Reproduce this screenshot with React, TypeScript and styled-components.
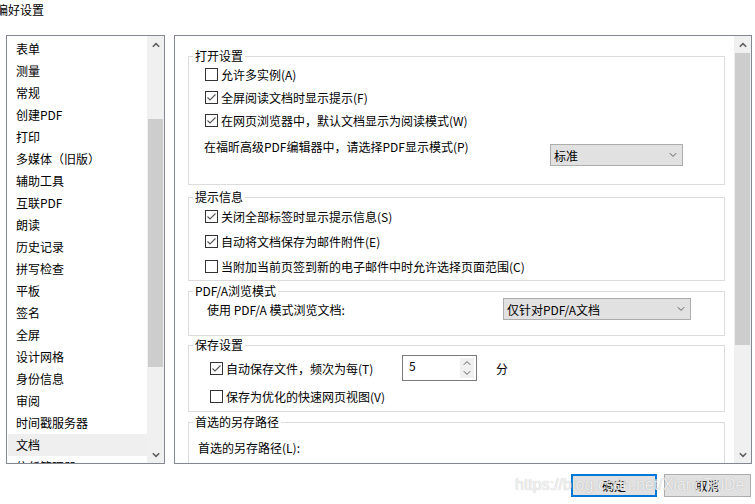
import React from "react";
import styled, { createGlobalStyle } from "styled-components";

const GlobalStyle = createGlobalStyle`
  html, body {
    margin: 0;
    padding: 0;
    background: #fff;
  }
  body {
    font-family: "Noto Sans CJK SC", "Noto Sans", sans-serif;
    font-size: 12px;
    color: #000;
  }
  * {
    box-sizing: border-box;
  }
`;

const navItems = [
  "表单",
  "测量",
  "常规",
  "创建PDF",
  "打印",
  "多媒体（旧版）",
  "辅助工具",
  "互联PDF",
  "朗读",
  "历史记录",
  "拼写检查",
  "平板",
  "签名",
  "全屏",
  "设计网格",
  "身份信息",
  "审阅",
  "时间戳服务器",
  "文档",
  "信任管理器",
];

const Chevron = ({ up, thin }: { up?: boolean; thin?: boolean }) => (
  <svg width="8" height="6" viewBox="0 0 8 6">
    <polyline
      points={up ? "0.8,4.8 4,1.6 7.2,4.8" : "0.8,1.2 4,4.4 7.2,1.2"}
      fill="none"
      stroke="#606060"
      strokeWidth={thin ? 1 : 1.6}
    />
  </svg>
);

export default function App() {
  return (
    <Window>
      <GlobalStyle />
      <TitleBar>偏好设置</TitleBar>
      <Main>
        <NavList>
          <NavItems>
            {navItems.map((item) => (
              <NavItem key={item} $active={item === "文档"}>
                {item}
              </NavItem>
            ))}
          </NavItems>
          <ScrollBar>
            <ScrollArrow>
              <Chevron up />
            </ScrollArrow>
            <ScrollTrack>
              <ScrollThumb $offset={66} $size={248} />
            </ScrollTrack>
            <ScrollArrow>
              <Chevron />
            </ScrollArrow>
          </ScrollBar>
        </NavList>

        <Panel>
          <PanelContent>
            <Group $height={129} $gap={0} $pad="6px 41px 0 16px">
              <Legend>打开设置</Legend>
              <CheckRow $h={23}>
                <CheckBox />
                <span>允许多实例(A)</span>
              </CheckRow>
              <CheckRow $h={23}>
                <CheckBox checked />
                <span>全屏阅读文档时显示提示(F)</span>
              </CheckRow>
              <CheckRow $h={23}>
                <CheckBox checked />
                <span>在网页浏览器中，默认文档显示为阅读模式(W)</span>
              </CheckRow>
              <SelectRow>
                <FieldLabel>在福昕高级PDF编辑器中，请选择PDF显示模式(P)</FieldLabel>
                <Select $w={133} $top={5}>
                  <span>标准</span>
                  <Chevron thin />
                </Select>
              </SelectRow>
            </Group>

            <Group $height={84} $gap={12} $pad="6px 0 0 16px">
              <Legend>提示信息</Legend>
              <CheckRow $h={25}>
                <CheckBox checked />
                <span>关闭全部标签时显示提示信息(S)</span>
              </CheckRow>
              <CheckRow $h={25}>
                <CheckBox checked />
                <span>自动将文档保存为邮件附件(E)</span>
              </CheckRow>
              <CheckRow $h={25}>
                <CheckBox />
                <span>当附加当前页签到新的电子邮件中时允许选择页面范围(C)</span>
              </CheckRow>
            </Group>

            <Group $height={45} $gap={10} $pad="6px 33px 0 18px">
              <Legend>PDF/A浏览模式</Legend>
              <InlineRow>
                <span>使用 PDF/A 模式浏览文档:</span>
                <Select $w={188} $top={0}>
                  <span>仅针对PDF/A文档</span>
                  <Chevron thin />
                </Select>
              </InlineRow>
            </Group>

            <Group $height={67} $gap={9} $pad="9px 0 0 21px">
              <Legend>保存设置</Legend>
              <SpinRow>
                <CheckRow $h={26} $w={192}>
                  <CheckBox checked />
                  <span>自动保存文件，频次为每(T)</span>
                </CheckRow>
                <SpinBox>
                  <SpinValue>5</SpinValue>
                  <SpinButtons>
                    <Chevron up thin />
                    <Chevron thin />
                  </SpinButtons>
                </SpinBox>
                <Unit>分</Unit>
              </SpinRow>
              <CheckRow $h={22} $top={4}>
                <CheckBox />
                <span>保存为优化的快速网页视图(V)</span>
              </CheckRow>
            </Group>

            <Group $height={80} $gap={10} $pad="16px 0 0 9px">
              <Legend>首选的另存路径</Legend>
              <FieldLabel>首选的另存路径(L):</FieldLabel>
            </Group>
          </PanelContent>
          <ScrollBar>
            <ScrollArrow>
              <Chevron up />
            </ScrollArrow>
            <ScrollTrack>
              <ScrollThumb $offset={0} $size={292} />
            </ScrollTrack>
            <ScrollArrow>
              <Chevron />
            </ScrollArrow>
          </ScrollBar>
        </Panel>
      </Main>

      <Footer>
        <Button $primary>确定</Button>
        <Button>取消</Button>
      </Footer>
      <Watermark>https://blog.csdn.net/XiangTaiDe</Watermark>
    </Window>
  );
}

const CheckBox = ({ checked }: { checked?: boolean }) => (
  <Box>
    {checked && (
      <svg width="11" height="11" viewBox="0 0 11 11">
        <polyline
          points="1.5,5.5 4,8 9.5,2.5"
          fill="none"
          stroke="#555"
          strokeWidth="1.1"
        />
      </svg>
    )}
  </Box>
);

const Window = styled.div`
  position: relative;
  width: 755px;
  height: 504px;
  overflow: hidden;
  background: #fff;
  display: flex;
  flex-direction: column;
`;

const TitleBar = styled.div`
  height: 35px;
  padding-top: 2px;
  margin-left: -4px;
  line-height: 16px;
  font-size: 12px;
`;

const Main = styled.div`
  display: flex;
  gap: 9px;
  height: 429px;
  padding-left: 6px;
`;

const NavList = styled.div`
  display: flex;
  width: 159px;
  height: 100%;
  border: 1px solid #828790;
  overflow: hidden;
`;

const NavItems = styled.div`
  flex: 1;
  padding-top: 2px;
  overflow: hidden;
`;

const NavItem = styled.div<{ $active?: boolean }>`
  height: 22px;
  line-height: 22px;
  margin-left: 1px;
  padding-left: 8px;
  white-space: nowrap;
  background: ${(p) => (p.$active ? "#efefef" : "transparent")};
`;

const ScrollBar = styled.div`
  flex: none;
  display: flex;
  flex-direction: column;
  width: 17px;
  height: 100%;
  background: #f0f0f0;
`;

const ScrollArrow = styled.div`
  flex: none;
  height: 17px;
  display: flex;
  align-items: center;
  justify-content: center;
`;

const ScrollTrack = styled.div`
  flex: 1;
  padding: 0 1px;
`;

const ScrollThumb = styled.div<{ $offset: number; $size: number }>`
  margin-top: ${(p) => p.$offset}px;
  height: ${(p) => p.$size}px;
  background: #cdcdcd;
`;

const Panel = styled.div`
  display: flex;
  width: 578px;
  height: 100%;
  border: 1px solid #828790;
  overflow: hidden;
`;

const PanelContent = styled.div`
  flex: 1;
  padding: 20px 9px 0 13px;
  overflow: hidden;
`;

const Group = styled.div<{ $height: number; $gap: number; $pad: string }>`
  position: relative;
  flex: none;
  height: ${(p) => p.$height}px;
  margin-top: ${(p) => p.$gap}px;
  padding: ${(p) => p.$pad};
  border: 1px solid #dcdcdc;
`;

const Legend = styled.span`
  position: absolute;
  top: -9px;
  left: 4px;
  padding: 0 2px;
  line-height: 16px;
  background: #fff;
  white-space: nowrap;
`;

const CheckRow = styled.div<{ $h: number; $w?: number; $top?: number }>`
  display: flex;
  align-items: center;
  gap: 3px;
  height: ${(p) => p.$h}px;
  width: ${(p) => (p.$w ? `${p.$w}px` : "auto")};
  margin-top: ${(p) => p.$top ?? 0}px;
  white-space: nowrap;
`;

const Box = styled.span`
  flex: none;
  display: flex;
  align-items: center;
  justify-content: center;
  width: 13px;
  height: 13px;
  border: 1px solid #333;
  background: #fff;
`;

const SelectRow = styled.div`
  display: flex;
  align-items: flex-start;
  margin-top: 7px;
  margin-left: -1px;
`;

const FieldLabel = styled.span`
  line-height: 16px;
  white-space: nowrap;
`;

const InlineRow = styled.div`
  display: flex;
  align-items: center;
  height: 22px;
  white-space: nowrap;
`;

const Select = styled.div<{ $w: number; $top: number }>`
  flex: none;
  display: flex;
  align-items: center;
  justify-content: space-between;
  width: ${(p) => p.$w}px;
  height: 22px;
  margin-left: auto;
  margin-top: ${(p) => p.$top}px;
  padding: 0 5px 0 3px;
  border: 1px solid #adadad;
  background: #e1e1e1;
  white-space: nowrap;
`;

const SpinRow = styled.div`
  display: flex;
  align-items: center;
  height: 26px;
`;

const SpinBox = styled.div`
  flex: none;
  display: flex;
  width: 75px;
  height: 26px;
  padding: 2px;
  border: 1px solid #7a7a7a;
  background: #fff;
`;

const SpinValue = styled.span`
  flex: 1;
  padding-left: 4px;
  line-height: 16px;
`;

const SpinButtons = styled.div`
  flex: none;
  display: flex;
  flex-direction: column;
  align-items: center;
  justify-content: space-around;
  width: 14px;
  background: #f0f0f0;
`;

const Unit = styled.span`
  margin-left: 19px;
`;

const Footer = styled.div`
  display: flex;
  justify-content: flex-end;
  gap: 7px;
  padding: 10px 4px 0 0;
`;

const Button = styled.div<{ $primary?: boolean }>`
  display: flex;
  align-items: center;
  justify-content: center;
  width: ${(p) => (p.$primary ? 86 : 87)}px;
  height: 23px;
  background: #e1e1e1;
  border: ${(p) => (p.$primary ? "2px solid #0078d7" : "1px solid #adadad")};
`;

const Watermark = styled.div`
  position: absolute;
  left: 515px;
  top: 476px;
  font-family: "Liberation Sans", Arial, sans-serif;
  font-size: 16px;
  line-height: 18px;
  color: rgba(255, 255, 255, 0.8);
  text-shadow: 0 0 1px rgba(110, 110, 110, 0.55);
  white-space: nowrap;
  pointer-events: none;
`;
